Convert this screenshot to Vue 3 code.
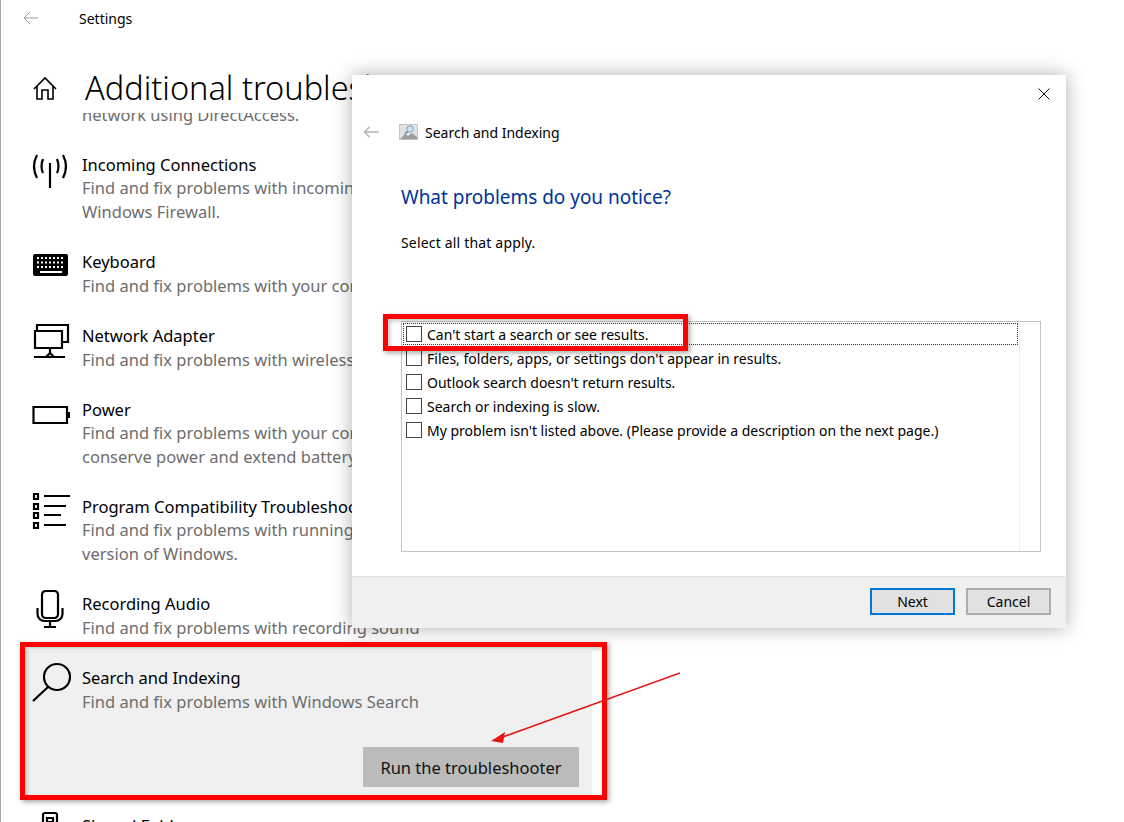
<script setup>
const rows = [
  { title: null, lines: ['network using DirectAccess.'], shapes: [], cls: 'clip' },
  { title: 'Incoming Connections', lines: ['Find and fix problems with incoming computer connections and', 'Windows Firewall.'], cls: 'tall', shapes: [
    { d: 'M5 4Q-1 15.5 5 27' }, { d: 'M11 8Q8 15.5 11 22' }, { d: 'M31 4Q37 15.5 31 27' }, { d: 'M25 8Q28 15.5 25 22' }, { d: 'M18 12V37' } ] },
  { title: 'Keyboard', lines: ["Find and fix problems with your computer's keyboard settings."], shapes: [
    { d: 'M3 6H34Q36 6 36 8V26Q36 28 34 28H3Q1 28 1 26V8Q1 6 3 6Z', c: 'f' },
    { d: 'M5 10H33M5 14.5H33M5 19H33', c: 'k' }, { d: 'M8 24H30', c: 'w' } ] },
  { title: 'Network Adapter', lines: ['Find and fix problems with wireless and other network adapters.'], shapes: [
    { d: 'M3 9H30V26H3Z' }, { d: 'M5 9V3H36V20H30' }, { d: 'M18 26V31M14 35L18 31L22 35M2 35H33' } ] },
  { title: 'Power', lines: ["Find and fix problems with your computer's power settings to", 'conserve power and extend battery life.'], cls: 'tall', shapes: [
    { d: 'M1.5 11H35V27H1.5Z' }, { d: 'M36 16H38V22H36Z', c: 'f' } ] },
  { title: 'Program Compatibility Troubleshooter', lines: ['Find and fix problems with running older programs on this', 'version of Windows.'], cls: 'tall', shapes: [
    { d: 'M2 1H6V6H2ZM2 11H6V16H2ZM2 20H6V25H2ZM2 30H6V35H2Z' }, { d: 'M12 3H38M12 13H34M12 22H29M12 32H34' } ] },
  { title: 'Recording Audio', lines: ['Find and fix problems with recording sound'], shapes: [
    { d: 'M14 1H22Q26 1 26 5V24Q26 28 22 28H14Q10 28 10 24V5Q10 1 14 1Z' }, { d: 'M5.5 18V24A7 7 0 0 0 12.5 31H23.5A7 7 0 0 0 30.5 24V18' }, { d: 'M18 31V37M12 37H24' } ] },
  { title: 'Search and Indexing', lines: ['Find and fix problems with Windows Search'], cls: 'sel', shapes: [
    { d: 'M12 13a13 13 0 1 0 26 0a13 13 0 1 0-26 0Z' }, { d: 'M16 23L1 37' } ] },
  { title: 'Shared Folders', lines: ['Find and fix problems with accessing files'], shapes: [
    { d: 'M13 1H23Q25 1 25 3V34H11V3Q11 1 13 1Z' }, { d: 'M15 6H21V10H15Z' } ] }
]
const problems = [
  "Can't start a search or see results.",
  "Files, folders, apps, or settings don't appear in results.",
  "Outlook search doesn't return results.",
  'Search or indexing is slow.',
  "My problem isn't listed above. (Please provide a description on the next page.)"
]
</script>

<template>
  <div class="page">
    <i class="edge"></i>
    <header class="topbar">
      <svg class="back" width="16" height="14" viewBox="0 0 16 14"><path d="M15 7H1M7 1L1 7L7 13" /></svg>
      <span>Settings</span>
    </header>
    <div class="head">
      <svg class="home" width="24" height="24" viewBox="0 0 24 24"><path d="M1 13L12 2L23 13M4 10V23H9V14H15V23H20V10" /></svg>
      <h1>Additional troubleshooters</h1>
    </div>
    <div class="list">
      <div v-for="r in rows" :key="r.lines[0]" class="row" :class="r.cls">
        <svg v-if="r.shapes.length" class="ico" width="40" height="44" viewBox="0 0 40 44">
          <path v-for="s in r.shapes" :key="s.d" :d="s.d" :class="s.c" />
        </svg>
        <div class="txt">
          <div v-if="r.title" class="title">{{ r.title }}</div>
          <div v-for="l in r.lines" :key="l" class="desc">{{ l }}</div>
          <div v-if="r.cls === 'sel'" class="runwrap"><button class="run">Run the troubleshooter</button></div>
        </div>
      </div>
    </div>

    <section class="dialog">
      <div class="closebar">
        <svg width="12" height="12" viewBox="0 0 12 12"><path d="M0.5 0.5L11.5 11.5M11.5 0.5L0.5 11.5" /></svg>
      </div>
      <div class="dhead">
        <svg class="dback" width="17" height="12" viewBox="0 0 17 12"><path d="M16 6H1.5M6.5 1L1.5 6L6.5 11" /></svg>
        <svg class="appico" width="19" height="16" viewBox="0 0 19 16">
          <rect x="0.5" y="0.5" width="18" height="15" fill="#e2e2e2" stroke="#c4c4c4" />
          <path d="M1 15L6 10L9 12L13 9L18 13V15Z" fill="#9c9c9c" />
          <circle cx="11" cy="5" r="3.2" fill="#cfe2f3" stroke="#7fa3c6" />
          <path d="M8.5 7.5L6 10" stroke="#777" stroke-width="1.4" />
        </svg>
        <span>Search and Indexing</span>
      </div>
      <div class="dbody">
        <h2>What problems do you notice?</h2>
        <p>Select all that apply.</p>
        <div class="box">
          <div class="boxin">
            <label v-for="(p, i) in problems" :key="p" class="opt" :class="{ focus: i === 0 }">
              <i class="chk"></i>{{ p }}
            </label>
          </div>
        </div>
      </div>
      <footer class="dfoot">
        <button class="btn primary">Next</button>
        <button class="btn">Cancel</button>
      </footer>
    </section>

    <div class="mark mark-a"></div>
    <div class="mark mark-b"></div>
    <svg class="arrow" width="200" height="80" viewBox="480 668 200 80">
      <path d="M680 673L500 738" fill="none" stroke="#e81414" stroke-width="1.5" />
      <path d="M491 741L505 732L503 743Z" fill="#e81414" />
    </svg>
  </div>
</template>

<style>
html, body { margin: 0; background: #fff; }
</style>

<style scoped>
.page {
  position: relative; width: 1124px; height: 822px; overflow: hidden; background: #fff;
  font-family: "Noto Sans", "Open Sans", sans-serif; color: #000;
  display: flex; flex-direction: column; box-sizing: border-box;
  border-left: 1px solid #ababab;
}
.edge { position: absolute; left: -1px; top: 0; width: 1px; height: 13px; background: #6fa6b8; }
.topbar { height: 36px; display: flex; align-items: center; font-size: 14px; padding-left: 22px; flex: none; }
.back { margin-right: 40px; }
.back path { fill: none; stroke: #9a9a9a; stroke-width: 1; }
.head { height: 77px; flex: none; box-sizing: border-box; padding: 27px 0 0 32px; display: flex; align-items: center; }
.home { margin-right: 28px; }
.home path { fill: none; stroke: #000; stroke-width: 1.6; }
h1 { margin: 0; font-size: 32.5px; font-weight: 300; line-height: 46px; white-space: nowrap; }
.list { flex: 1; overflow: hidden; padding-left: 22px; width: 569px; }
.row { display: flex; padding-left: 9px; margin-bottom: 26px; white-space: nowrap; }
.row.clip { margin-top: -10px; padding-left: 59px; }
.ico { flex: none; margin: -2px 10px 0 0; overflow: visible; }
.ico path { fill: none; stroke: #000; stroke-width: 2.2; }
.ico path.f { fill: #000; stroke: none; }
.ico path.k { stroke: #fff; stroke-width: 2; stroke-dasharray: 2 2; }
.ico path.w { stroke: #fff; stroke-width: 2; }
.txt { flex: 1; min-width: 0; }
.title { font-size: 16.5px; line-height: 24px; }
.row.tall .title { line-height: 23px; }
.desc { font-size: 16.5px; line-height: 24px; color: #6d6d6d; }
.row.sel { background: #f0f0f0; margin: -15px 0 19px; padding: 15px 13px 8px 9px; }
.runwrap { display: flex; justify-content: flex-end; margin-top: 33px; }
.run { width: 216px; height: 40px; border: 0; padding: 0; background: #bbb; color: #111; font: inherit; font-size: 16.5px; }

.dialog {
  position: absolute; left: 351px; top: 75px; width: 714px; height: 553px; background: #fff;
  display: flex; flex-direction: column; box-shadow: 0 0 18px rgba(0,0,0,.32); font-size: 14px;
}
.closebar { height: 38px; display: flex; justify-content: flex-end; align-items: center; padding-right: 16px; flex: none; }
.closebar path { stroke: #111; fill: none; stroke-width: 1; }
.dhead { height: 38px; display: flex; align-items: center; padding-left: 11px; flex: none; }
.dback { margin-right: 19px; }
.dback path { fill: none; stroke: #b5b5b5; stroke-width: 1.6; }
.appico { margin-right: 7px; }
.dbody { flex: 1; padding: 32px 0 0 49px; }
h2 { margin: 0; font-size: 19px; line-height: 28px; font-weight: 400; color: #003399; letter-spacing: -.03px; }
p { margin: 22px 0 68px; line-height: 20px; letter-spacing: .18px; }
.box { width: 638px; height: 229px; border: 1px solid #c4c4c4; }
.boxin { width: 617px; height: 100%; border-right: 1px solid #eaf2fb; }
.opt { height: 24px; display: flex; align-items: center; padding-left: 4px; white-space: nowrap; box-sizing: border-box; }
.opt.focus { outline: 1px dotted #333; outline-offset: -2px; }
.chk { width: 14px; height: 14px; border: 1px solid #444; margin-right: 5px; background: #fff; flex: none; }
.dfoot { height: 52px; flex: none; box-sizing: border-box; border-top: 1px solid #e3e3e3; background: #f0f0f0; display: flex; justify-content: flex-end; gap: 11px; padding: 11px 15px 0 0; }
.btn { width: 85px; height: 27px; box-sizing: border-box; border: 2px solid #adadad; background: #e1e1e1; font: inherit; color: #000; padding: 0; }
.btn.primary { border-color: #0078d7; }

.mark { position: absolute; box-sizing: border-box; border: 5px solid #f00; box-shadow: 2px 2px 5px rgba(0,0,0,.35), inset 2px 2px 4px rgba(0,0,0,.22); }
.mark-a { left: 382px; top: 314px; width: 305px; height: 37px; }
.mark-b { left: 19px; top: 642px; width: 587px; height: 158px; }
.arrow { position: absolute; left: 479px; top: 668px; }
</style>
